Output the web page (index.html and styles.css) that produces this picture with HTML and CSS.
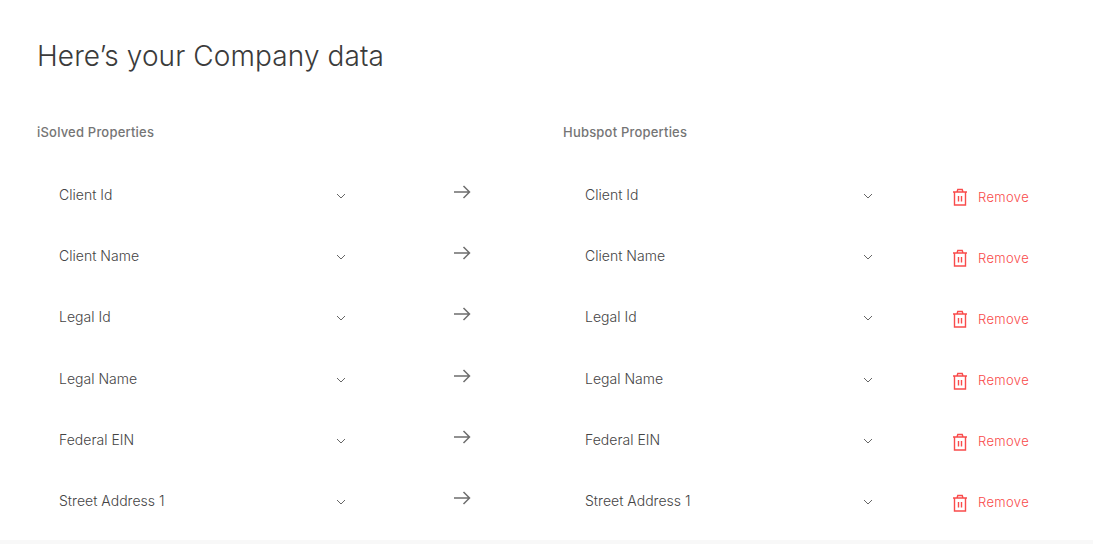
FILE: index.html
```html
<!DOCTYPE html>
<html lang="en">
<head>
<meta charset="utf-8">
<title>Company data</title>
<link rel="stylesheet" href="styles.css">
</head>
<body>
<main class="page">
  <h1 class="title">Here’s your Company data</h1>
  <div class="heads">
    <div class="head">iSolved Properties</div>
    <div></div>
    <div class="head">Hubspot Properties</div>
  </div>
  <div class="rows">
    <div class="row">
      <div class="select"><span>Client Id</span><svg class="chev" viewBox="0 0 10 6"><path d="M1 1l4 4 4-4"/></svg></div>
      <svg class="arrow" viewBox="0 0 18 14"><path d="M1 7h15.500M10.500 1l6 6-6 6"/></svg>
      <div class="select"><span>Client Id</span><svg class="chev" viewBox="0 0 10 6"><path d="M1 1l4 4 4-4"/></svg></div>
      <div class="remove"><svg class="trash" viewBox="0 0 16 18"><path d="M1 4h14M2.500 4v13h11V4M5 4l.8-2.500h4.400L11 4M6.500 8v5.500M9.500 8v5.500"/></svg><span>Remove</span></div>
    </div>
    <div class="row">
      <div class="select"><span>Client Name</span><svg class="chev" viewBox="0 0 10 6"><path d="M1 1l4 4 4-4"/></svg></div>
      <svg class="arrow" viewBox="0 0 18 14"><path d="M1 7h15.500M10.500 1l6 6-6 6"/></svg>
      <div class="select"><span>Client Name</span><svg class="chev" viewBox="0 0 10 6"><path d="M1 1l4 4 4-4"/></svg></div>
      <div class="remove"><svg class="trash" viewBox="0 0 16 18"><path d="M1 4h14M2.500 4v13h11V4M5 4l.8-2.500h4.400L11 4M6.500 8v5.500M9.500 8v5.500"/></svg><span>Remove</span></div>
    </div>
    <div class="row">
      <div class="select"><span>Legal Id</span><svg class="chev" viewBox="0 0 10 6"><path d="M1 1l4 4 4-4"/></svg></div>
      <svg class="arrow" viewBox="0 0 18 14"><path d="M1 7h15.500M10.500 1l6 6-6 6"/></svg>
      <div class="select"><span>Legal Id</span><svg class="chev" viewBox="0 0 10 6"><path d="M1 1l4 4 4-4"/></svg></div>
      <div class="remove"><svg class="trash" viewBox="0 0 16 18"><path d="M1 4h14M2.500 4v13h11V4M5 4l.8-2.500h4.400L11 4M6.500 8v5.500M9.500 8v5.500"/></svg><span>Remove</span></div>
    </div>
    <div class="row">
      <div class="select"><span>Legal Name</span><svg class="chev" viewBox="0 0 10 6"><path d="M1 1l4 4 4-4"/></svg></div>
      <svg class="arrow" viewBox="0 0 18 14"><path d="M1 7h15.500M10.500 1l6 6-6 6"/></svg>
      <div class="select"><span>Legal Name</span><svg class="chev" viewBox="0 0 10 6"><path d="M1 1l4 4 4-4"/></svg></div>
      <div class="remove"><svg class="trash" viewBox="0 0 16 18"><path d="M1 4h14M2.500 4v13h11V4M5 4l.8-2.500h4.400L11 4M6.500 8v5.500M9.500 8v5.500"/></svg><span>Remove</span></div>
    </div>
    <div class="row">
      <div class="select"><span>Federal EIN</span><svg class="chev" viewBox="0 0 10 6"><path d="M1 1l4 4 4-4"/></svg></div>
      <svg class="arrow" viewBox="0 0 18 14"><path d="M1 7h15.500M10.500 1l6 6-6 6"/></svg>
      <div class="select"><span>Federal EIN</span><svg class="chev" viewBox="0 0 10 6"><path d="M1 1l4 4 4-4"/></svg></div>
      <div class="remove"><svg class="trash" viewBox="0 0 16 18"><path d="M1 4h14M2.500 4v13h11V4M5 4l.8-2.500h4.400L11 4M6.500 8v5.500M9.500 8v5.500"/></svg><span>Remove</span></div>
    </div>
    <div class="row">
      <div class="select"><span>Street Address 1</span><svg class="chev" viewBox="0 0 10 6"><path d="M1 1l4 4 4-4"/></svg></div>
      <svg class="arrow" viewBox="0 0 18 14"><path d="M1 7h15.500M10.500 1l6 6-6 6"/></svg>
      <div class="select"><span>Street Address 1</span><svg class="chev" viewBox="0 0 10 6"><path d="M1 1l4 4 4-4"/></svg></div>
      <div class="remove"><svg class="trash" viewBox="0 0 16 18"><path d="M1 4h14M2.500 4v13h11V4M5 4l.8-2.500h4.400L11 4M6.500 8v5.500M9.500 8v5.500"/></svg><span>Remove</span></div>
    </div>
  </div>
</main>
<div class="footer-edge"></div>
</body>
</html>
```

FILE: styles.css
```css
html, body {
  margin: 0;
  padding: 0;
  background: #fff;
  overflow: hidden;
}
body {
  width: 1093px;
  height: 560px;
  font-family: "Inter", "Liberation Sans", sans-serif;
  color: #3d3d3d;
}
.page {
  height: 540px;
  padding: 0 0 0 37px;
  box-sizing: border-box;
}
.title {
  margin: 0;
  padding-top: 38px;
  font-size: 28px;
  line-height: 36px;
  font-weight: 300;
  letter-spacing: 0.1px;
  color: #3b3b3b;
}
.heads, .row {
  display: grid;
  grid-template-columns: 326px 200px 326px 1fr;
}
.heads {
  margin-top: 48px;
  height: 20px;
  font-size: 13px;
  line-height: 20px;
}
.head {
  font-weight: 500;
  letter-spacing: 0.2px;
  color: #757575;
}
.rows {
  margin-top: 30px;
}
.row {
  height: 61.2px;
  align-items: start;
}
.select {
  display: flex;
  align-items: center;
  height: 46px;
  padding: 0 17px 0 22px;
  font-size: 14px;
  line-height: 18px;
  font-weight: 300;
  letter-spacing: 0.02px;
  color: #444;
}
.select span { flex: 1; }
.select + .arrow + .select { padding-right: 16px; }
.chev {
  width: 10px;
  height: 6px;
  margin-top: 2px;
  fill: none;
  stroke: #666;
  stroke-width: 1;
}
.arrow {
  justify-self: center;
  width: 18px;
  height: 14px;
  margin-top: 13px;
  margin-left: -2px;
  fill: none;
  stroke: #6e6e6e;
  stroke-width: 1.500;
}
.remove {
  display: flex;
  align-items: center;
  gap: 10px;
  height: 44px;
  margin-top: 3px;
  padding-left: 63px;
  font-size: 13px;
  line-height: 17px;
  font-weight: 300;
  letter-spacing: 0.35px;
  color: #f94b4b;
}
.trash {
  width: 16px;
  height: 18px;
  fill: none;
  stroke: #f94b4b;
  stroke-width: 1.400;
}
.footer-edge {
  height: 4px;
  background: #f8f8f8;
}
```
